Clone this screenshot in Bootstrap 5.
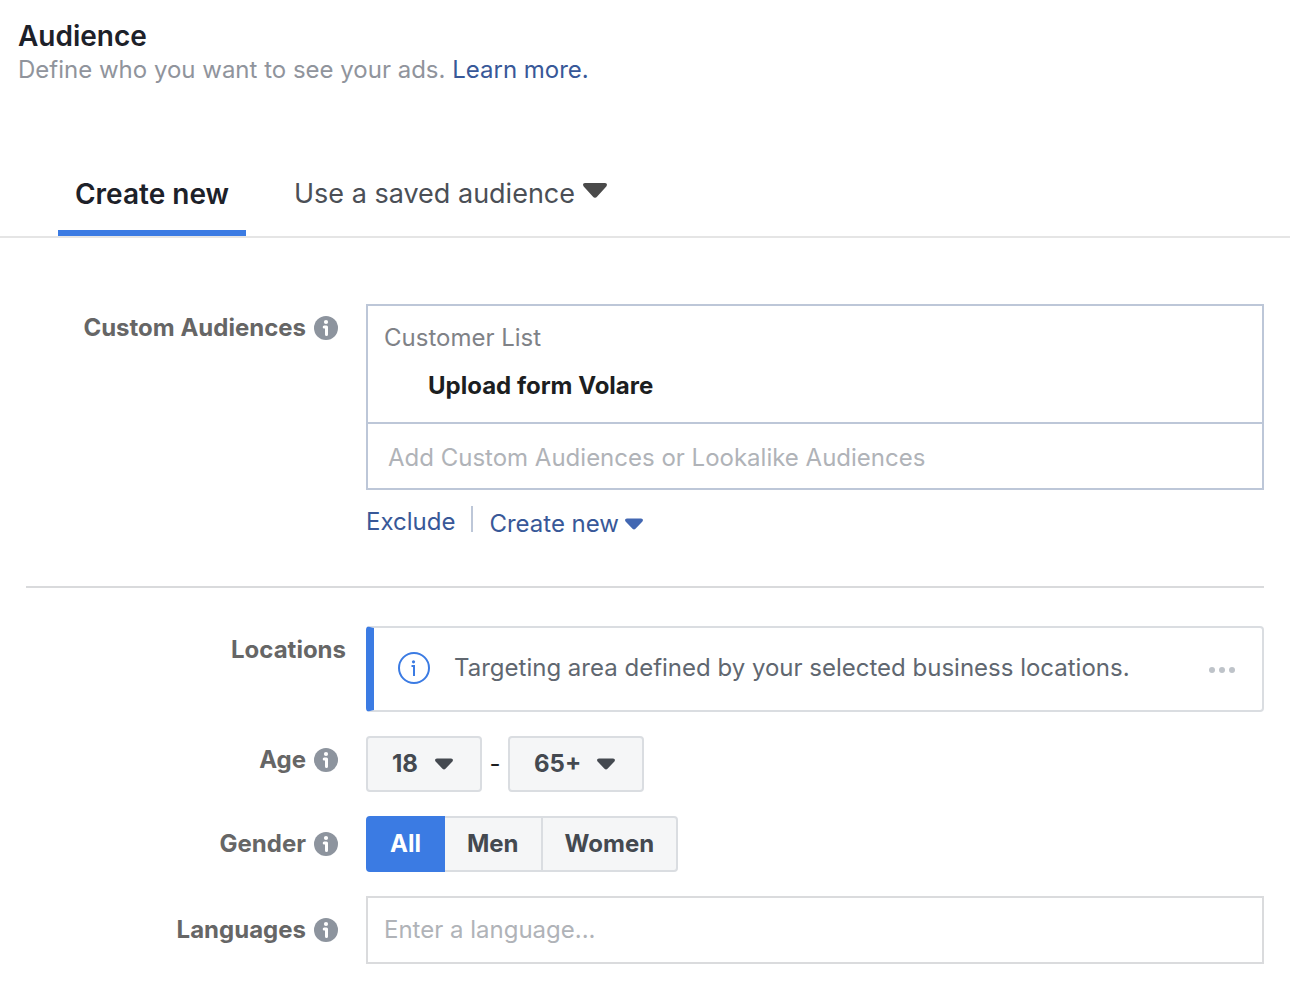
<!DOCTYPE html>
<html lang="en">
<head>
<meta charset="utf-8">
<meta name="viewport" content="width=device-width, initial-scale=1">
<title>Audience</title>
<link href="https://cdn.jsdelivr.net/npm/bootstrap@5.3.0/dist/css/bootstrap.min.css" rel="stylesheet">
<style>
  body { font-family: Inter, "Liberation Sans", sans-serif; font-size: 24px; line-height: 32px; color: #1c1e21; background: #fff; }
  a, .link-btn { color: #385898; text-decoration: none; }
  .page-head { padding: 20px 18px 0; }
  .page-title { font-size: 28px; line-height: 32px; font-weight: 600; color: #1d2129; }
  .intro { color: #90949c; line-height: 36px; }

  .audience-tabs { margin-top: 80px; padding: 0 58px; gap: 32px; border-bottom: 2px solid #e5e5e5; }
  .audience-tabs .nav-link { padding: 10px 16px 20px; font-size: 27px; line-height: 32px; color: #4b4f56; border: 0; border-bottom: 6px solid transparent; border-radius: 0; background: none; }
  .audience-tabs .nav-link.active { min-width: 188px; font-size: 28px; font-weight: 600; color: #1d2129; border-bottom-color: #3b7be3; background: none; }

  .audience-form { padding: 66px 26px 34px; }
  .field-row { gap: 20px; margin-bottom: 24px; }
  .field-label { flex: 0 0 320px; display: flex; justify-content: flex-end; align-items: center; gap: 8px; font-weight: 700; color: #666; }
  .field-label.top { padding-top: 8px; }
  .field-label svg { margin-right: 8px; }
  .divider { margin: 46px 0 38px; border: 0; border-top: 2px solid #d9dadc; opacity: 1; }

  .token-box { border: 2px solid #bdc7d8; }
  .token-list { padding: 16px 16px 20px; border-bottom: 2px solid #bdc7d8; }
  .token-group { color: #7f8287; }
  .token-name { padding: 16px 0 0 44px; font-weight: 700; color: #1c1e21; }
  .token-box .form-control { padding: 18px 20px 14px; border: 0; border-radius: 0; font-size: 24px; line-height: 32px; }
  .form-control::placeholder { color: #b0b3b8; opacity: 1; }
  .lang-input { padding: 16px; border: 2px solid #dadbdd; border-radius: 0; font-size: 24px; line-height: 32px; }
  .token-links { gap: 16px; padding-top: 16px; }
  .token-links .bar { width: 2px; height: 26px; background: #bdc7d8; }
  .link-btn { padding: 0; border: 0; background: none; }
  .link-btn.drop { gap: 6px; padding-top: 2px; }

  .notice { padding: 24px 24px 26px 22px; border: 2px solid #dadde1; border-left: 8px solid #3b7be3; border-radius: 4px; color: #606770; }
  .notice svg { flex: none; }
  .notice-text { padding-left: 24px; }

  .age-select { width: 116px; height: 56px; padding: 0 24px; border: 2px solid #dadde1; border-radius: 4px; font-size: 24px; font-weight: 700; color: #444950;
    background: #f5f6f7 url("data:image/svg+xml,%3Csvg xmlns='http://www.w3.org/2000/svg' viewBox='0 0 18 12'%3E%3Cpath d='M2 .5h14c2 0 2.500 2 1.200 3.200l-6.700 7c-1 1-2 1-3 0l-6.700-7C-.5 2.500 0 .5 2 .5z' fill='%23444950'/%3E%3C/svg%3E") no-repeat right 27px center / 18px 12px; }
  .age-select.wide { width: 136px; }
  .age-dash { width: 26px; text-align: center; }

  .gender .btn { padding: 10px 22px; font-size: 24px; line-height: 32px; font-weight: 700; color: #444950; background: #f5f6f7; border: 2px solid #dadde1; border-radius: 4px; }
  .btn-group.gender > .btn-check:not(:first-child) + .btn { margin-left: -2px; }
  .gender .btn-check:checked + .btn { color: #fff; background: #3b7be3; border-color: #3b7be3; }
</style>
</head>
<body>
<svg class="d-none" aria-hidden="true">
  <symbol id="info" viewBox="0 0 24 24">
    <circle cx="12" cy="12" r="12" fill="#8d949e"/>
    <circle cx="12" cy="6" r="2.100" fill="#fff"/>
    <path d="M10.200 11H12.500V18.500" fill="none" stroke="#fff" stroke-width="3" stroke-linecap="round" stroke-linejoin="round"/>
  </symbol>
  <symbol id="caret" viewBox="0 0 18 12">
    <path d="M2 .5h14c2 0 2.500 2 1.200 3.200l-6.700 7c-1 1-2 1-3 0l-6.700-7C-.5 2.500 0 .5 2 .5z" fill="currentColor"/>
  </symbol>
</svg>

<header class="page-head">
  <h1 class="page-title mb-0">Audience</h1>
  <p class="intro mb-0">Define who you want to see your ads. <a href="#">Learn more.</a></p>
</header>

<ul class="nav audience-tabs" role="tablist">
  <li class="nav-item"><button class="nav-link active" type="button" role="tab" aria-selected="true">Create new</button></li>
  <li class="nav-item"><button class="nav-link d-flex" type="button" role="tab" aria-selected="false">Use a saved audience
    <svg class="ms-2 mt-1" width="24" height="16" viewBox="0 0 24 16" aria-hidden="true"><path d="M2 1h20c2 0 2.500 2 1.300 3.500l-9.100 10c-1.400 1.600-3 1.600-4.400 0L.7 4.500C-.5 3 0 1 2 1z" fill="#4a4a4a"/></svg></button></li>
</ul>

<form class="audience-form">
  <div class="field-row d-flex align-items-start">
    <label class="field-label top" for="custom">Custom Audiences <svg width="24" height="24"><use href="#info"/></svg></label>
    <div class="flex-grow-1">
      <div class="token-box">
        <div class="token-list">
          <div class="token-group">Customer List</div>
          <div class="token-name">Upload form Volare</div>
        </div>
        <input class="form-control" id="custom" type="text" placeholder="Add Custom Audiences or Lookalike Audiences">
      </div>
      <div class="token-links d-flex align-items-start">
        <a href="#">Exclude</a>
        <span class="bar"></span>
        <button class="link-btn drop d-flex align-items-center" type="button">Create new
          <svg width="18" height="12" color="#4267b2"><use href="#caret"/></svg></button>
      </div>
    </div>
  </div>

  <hr class="divider">

  <div class="field-row d-flex align-items-start">
    <div class="field-label top">Locations</div>
    <div class="notice flex-grow-1 d-flex align-items-center">
      <svg width="34" height="32" viewBox="0 0 34 32" fill="none" stroke="#3b7be3" stroke-width="2" aria-hidden="true"><circle cx="18" cy="16" r="15"/><path d="M15.500 14H18V24"/><circle cx="17.500" cy="9.800" r="1.600" fill="#3b7be3" stroke="none"/></svg>
      <span class="notice-text flex-grow-1">Targeting area defined by your selected business locations.</span>
      <button class="link-btn d-flex" type="button" aria-label="More options"><svg width="30" height="10" viewBox="0 0 30 10" fill="#bec3c9"><circle cx="4" cy="7" r="3"/><circle cx="14" cy="7" r="3"/><circle cx="24" cy="7" r="3"/></svg></button>
    </div>
  </div>

  <div class="field-row d-flex align-items-start">
    <label class="field-label top" for="age-from">Age <svg width="24" height="24"><use href="#info"/></svg></label>
    <div class="d-flex align-items-center">
      <select class="form-select age-select" id="age-from"><option>18</option><option>21</option><option>25</option></select>
      <span class="age-dash">-</span>
      <select class="form-select age-select wide" aria-label="Maximum age"><option>65+</option><option>64</option><option>60</option></select>
    </div>
  </div>

  <div class="field-row d-flex align-items-center">
    <div class="field-label" id="gender-label">Gender <svg width="24" height="24"><use href="#info"/></svg></div>
    <div class="btn-group gender" role="group" aria-labelledby="gender-label">
      <input class="btn-check" type="radio" name="gender" id="g-all" checked><label class="btn" for="g-all">All</label>
      <input class="btn-check" type="radio" name="gender" id="g-men"><label class="btn" for="g-men">Men</label>
      <input class="btn-check" type="radio" name="gender" id="g-women"><label class="btn" for="g-women">Women</label>
    </div>
  </div>

  <div class="field-row d-flex align-items-center mb-0">
    <label class="field-label" for="language">Languages <svg width="24" height="24"><use href="#info"/></svg></label>
    <input class="form-control lang-input" id="language" type="text" placeholder="Enter a language...">
  </div>
</form>
<script src="https://cdn.jsdelivr.net/npm/bootstrap@5.3.0/dist/js/bootstrap.bundle.min.js"></script>
</body>
</html>
